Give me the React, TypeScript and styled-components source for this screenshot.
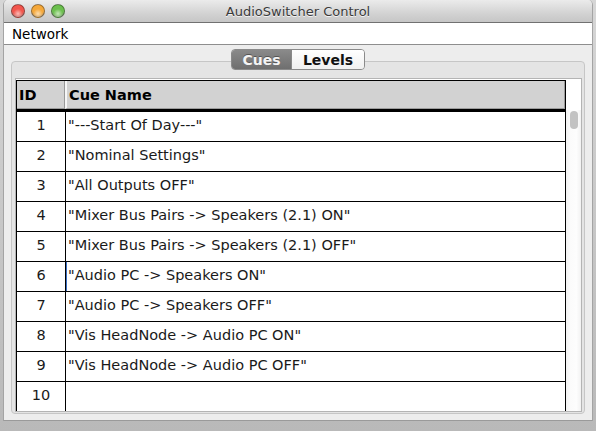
import React from 'react';
import styled, { createGlobalStyle } from 'styled-components';

const GlobalStyle = createGlobalStyle`
	html, body {
		margin: 0;
		padding: 0;
	}
	body {
		background: #c4c4c4;
		font-family: 'DejaVu Sans', 'Liberation Sans', sans-serif;
	}
`;

const Page = styled.div`
	width: 596px;
	height: 431px;
	overflow: hidden;
	background: linear-gradient(#d6d6d6, #b9b9b9);
	padding: 0 3px;
	box-sizing: border-box;
`;

const Window = styled.div`
	height: 421px;
	display: flex;
	flex-direction: column;
	background: #ededed;
	border-left: 1px solid #a4a4a4;
	border-right: 1px solid #a4a4a4;
	border-bottom: 1px solid #9a9a9a;
	border-radius: 5px 5px 0 0;
	overflow: hidden;
	box-sizing: border-box;
`;

const TitleBar = styled.div`
	height: 23px;
	flex: none;
	display: flex;
	align-items: center;
	position: relative;
	background: linear-gradient(#ebebeb, #d3d3d3 60%, #c6c6c6);
	border-bottom: 1px solid #717171;
	box-sizing: border-box;
`;

const Lights = styled.div`
	display: flex;
	gap: 6px;
	padding-left: 7px;
`;

const Light = styled.span<{ tone: string }>`
	width: 14px;
	height: 14px;
	border-radius: 50%;
	box-sizing: border-box;
	border: 1px solid rgba(0, 0, 0, 0.35);
	background: radial-gradient(circle at 50% 72%, #fff9 0, transparent 45%),
		radial-gradient(circle at 50% 35%, ${({ tone }) => tone} 0, ${({ tone }) => tone} 55%, #0004 100%);
`;

const Title = styled.div`
	position: absolute;
	left: 0;
	right: 0;
	text-align: center;
	font-size: 13px;
	color: #3a3a3a;
	text-shadow: 0 1px 0 #f4f4f4;
	pointer-events: none;
`;

const MenuBar = styled.div`
	height: 22px;
	flex: none;
	background: #fff;
	border-bottom: 1px solid #8e8e8e;
	display: flex;
	align-items: center;
	padding-left: 8px;
	padding-top: 1px;
	font-size: 13.5px;
	color: #000;
	box-sizing: border-box;
`;

const Content = styled.div`
	flex: 1;
	display: flex;
	flex-direction: column;
	padding: 4px 7px 6px;
	min-height: 0;
`;

const Tabs = styled.div`
	align-self: center;
	display: flex;
	height: 21px;
	margin-bottom: -9px;
	position: relative;
	z-index: 1;
	border: 1px solid #8a8a8a;
	border-radius: 4px;
	overflow: hidden;
	box-sizing: border-box;
`;

const Tab = styled.div<{ active?: boolean }>`
	display: flex;
	align-items: center;
	justify-content: center;
	width: ${({ active }) => (active ? '59px' : '72px')};
	font-size: 14px;
	font-weight: bold;
	color: ${({ active }) => (active ? '#f4f4f4' : '#111')};
	background: ${({ active }) =>
		active ? 'linear-gradient(#8a8a8a, #6f6f6f)' : 'linear-gradient(#ffffff, #f0f0f0)'};
	text-shadow: ${({ active }) => (active ? '0 -1px 0 #555' : 'none')};
	& + & {
		border-left: 1px solid #8a8a8a;
	}
`;

const Panel = styled.div`
	flex: 1;
	min-height: 0;
	display: flex;
	background: #e4e4e4;
	border: 1px solid #c6c6c6;
	border-radius: 4px;
	padding: 16px 2px 1px 3px;
`;

const ScrollBox = styled.div`
	flex: 1;
	display: flex;
	background: #fff;
	border: 1px solid #b4b4b4;
	padding-top: 1px;
	overflow: hidden;
`;

const Table = styled.div`
	flex: 1;
	display: flex;
	flex-direction: column;
	border-left: 1px solid #000;
	border-right: 1px solid #000;
	border-top: 1px solid #000;
`;

const HeaderRow = styled.div`
	display: grid;
	grid-template-columns: 48px 1fr;
	height: 28px;
	flex: none;
	border-bottom: 3px solid #000;
	background: #d2d2d2;
`;

const HeaderCell = styled.div<{ first?: boolean }>`
	display: flex;
	align-items: center;
	padding-left: 2px;
	padding-top: 1px;
	font-size: 14.5px;
	font-weight: bold;
	color: #000;
	border-right: ${({ first }) => (first ? '1px solid #999' : 'none')};
	border-left: ${({ first }) => (first ? 'none' : '2px solid #f6f6f6')};
	border-bottom: 1px solid #9c9c9c;
	box-shadow: ${({ first }) => (first ? 'none' : 'inset -1px 0 0 #9c9c9c')};
`;

const Row = styled.div`
	display: grid;
	grid-template-columns: 49px 1fr;
	height: 29px;
	flex: none;
	border-bottom: 1px solid #000;
`;

const IdCell = styled.div`
	display: flex;
	align-items: center;
	justify-content: center;
	padding-bottom: 3px;
	font-size: 14.5px;
	color: #1a1a1a;
	border-right: 1px solid #000;
`;

const NameCell = styled.div<{ focused?: boolean }>`
	display: flex;
	align-items: center;
	padding-left: 2px;
	padding-bottom: 3px;
	font-size: 14.5px;
	color: #1a1a1a;
	white-space: pre;
	box-shadow: ${({ focused }) => (focused ? 'inset 1px 0 0 #3b6fc4' : 'none')};
`;

const ScrollTrack = styled.div`
	width: 15px;
	flex: none;
	background: #fff;
	padding-top: 30px;
	box-sizing: border-box;
`;

const TrackBody = styled.div`
	height: 100%;
	background: linear-gradient(90deg, #f2f2f2, #fbfbfb 30%, #fdfdfd 70%, #f2f2f2);
	padding: 1px 3px 0 4px;
	box-sizing: border-box;
`;

const Thumb = styled.div`
	height: 18px;
	border-radius: 4px;
	background: #c2c2c2;
`;

const cues = [
	'"---Start Of Day---"',
	'"Nominal Settings"',
	'"All Outputs OFF"',
	'"Mixer Bus Pairs -> Speakers (2.1) ON"',
	'"Mixer Bus Pairs -> Speakers (2.1) OFF"',
	'"Audio PC -> Speakers ON"',
	'"Audio PC -> Speakers OFF"',
	'"Vis HeadNode -> Audio PC ON"',
	'"Vis HeadNode -> Audio PC OFF"',
	'',
	'',
];

const App: React.FC = () => {
	return (
		<>
			<GlobalStyle />
			<Page>
				<Window>
					<TitleBar>
						<Lights>
							<Light tone='#f2554c' />
							<Light tone='#f5a83a' />
							<Light tone='#6cc04e' />
						</Lights>
						<Title>AudioSwitcher Control</Title>
					</TitleBar>
					<MenuBar>Network</MenuBar>
					<Content>
						<Tabs>
							<Tab active>Cues</Tab>
							<Tab>Levels</Tab>
						</Tabs>
						<Panel>
							<ScrollBox>
								<Table>
									<HeaderRow>
										<HeaderCell first>ID</HeaderCell>
										<HeaderCell>Cue Name</HeaderCell>
									</HeaderRow>
									{cues.map((name, i) => (
										<Row key={i}>
											<IdCell>{i < 10 ? i + 1 : ''}</IdCell>
											<NameCell focused={i === 5}>{name}</NameCell>
										</Row>
									))}
								</Table>
								<ScrollTrack>
									<TrackBody>
										<Thumb />
									</TrackBody>
								</ScrollTrack>
							</ScrollBox>
						</Panel>
					</Content>
				</Window>
			</Page>
		</>
	);
};

export default App;
